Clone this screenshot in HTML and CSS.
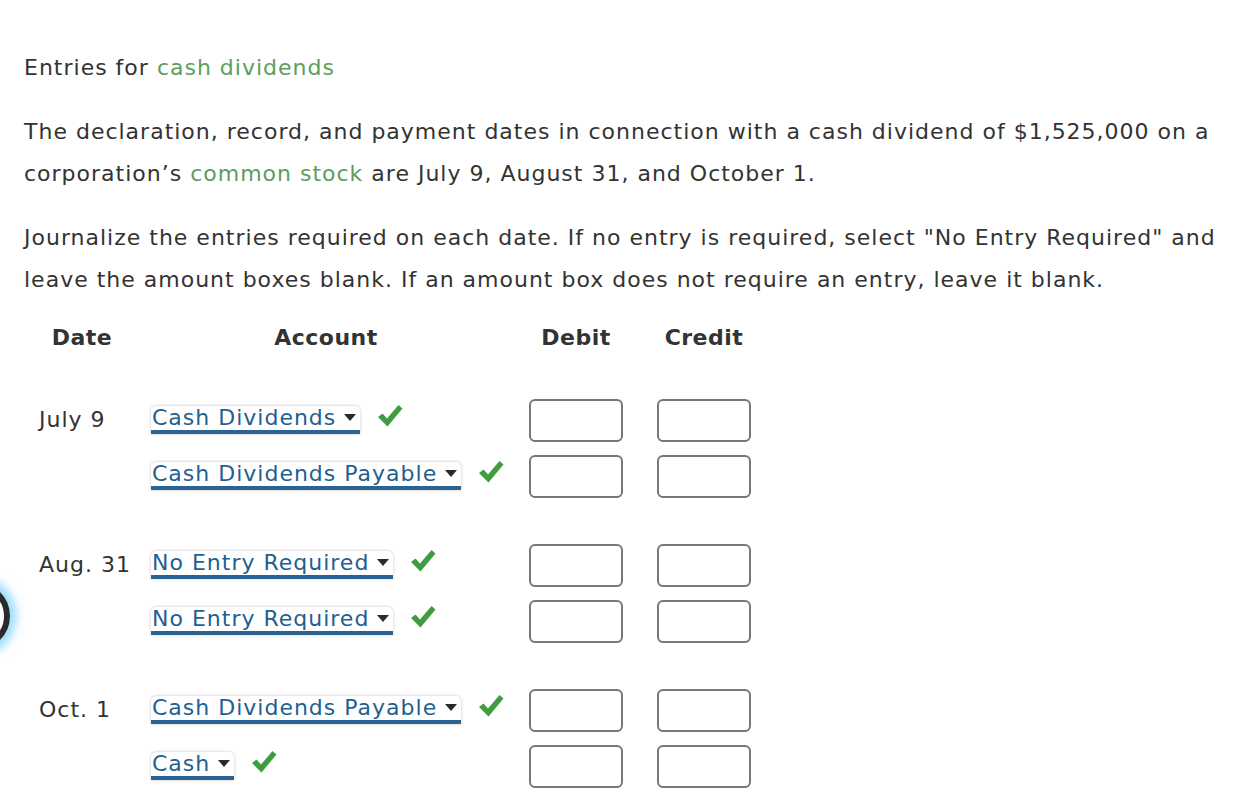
FILE: index.html
```html
<!DOCTYPE html>
<html lang="en">
<head>
    <meta charset="UTF-8">
    <meta name="viewport" content="width=device-width, initial-scale=1.0">
    <title>Entries for cash dividends</title>
    <link rel="stylesheet" href="styles.css">
</head>
<body>
    <div class="focus-ring"></div>

    <p class="title">Entries for <span class="term">cash dividends</span></p>

    <p>The declaration, record, and payment dates in connection with a cash dividend of $1,525,000 on a corporation’s <span class="term">common stock</span> are July 9, August 31, and October 1.</p>

    <p>Journalize the entries required on each date. If no entry is required, select "No Entry Required" and leave the amount boxes blank. If an amount box does not require an entry, leave it blank.</p>

    <div class="journal">
        <div class="row head">
            <div class="c-date">Date</div>
            <div class="c-acct">Account</div>
            <div class="c-amt">Debit</div>
            <div class="c-amt">Credit</div>
        </div>

        <div class="group">
            <div class="row">
                <div class="c-date">July 9</div>
                <div class="c-acct"><span class="pick">Cash Dividends</span><span class="ok"></span></div>
                <div class="c-amt"><span class="box"></span></div>
                <div class="c-amt"><span class="box"></span></div>
            </div>
            <div class="row">
                <div class="c-date"></div>
                <div class="c-acct"><span class="pick">Cash Dividends Payable</span><span class="ok"></span></div>
                <div class="c-amt"><span class="box"></span></div>
                <div class="c-amt"><span class="box"></span></div>
            </div>
        </div>

        <div class="group">
            <div class="row">
                <div class="c-date">Aug. 31</div>
                <div class="c-acct"><span class="pick">No Entry Required</span><span class="ok"></span></div>
                <div class="c-amt"><span class="box"></span></div>
                <div class="c-amt"><span class="box"></span></div>
            </div>
            <div class="row">
                <div class="c-date"></div>
                <div class="c-acct"><span class="pick">No Entry Required</span><span class="ok"></span></div>
                <div class="c-amt"><span class="box"></span></div>
                <div class="c-amt"><span class="box"></span></div>
            </div>
        </div>

        <div class="group">
            <div class="row">
                <div class="c-date">Oct. 1</div>
                <div class="c-acct"><span class="pick">Cash Dividends Payable</span><span class="ok"></span></div>
                <div class="c-amt"><span class="box"></span></div>
                <div class="c-amt"><span class="box"></span></div>
            </div>
            <div class="row">
                <div class="c-date"></div>
                <div class="c-acct"><span class="pick">Cash</span><span class="ok"></span></div>
                <div class="c-amt"><span class="box"></span></div>
                <div class="c-amt"><span class="box"></span></div>
            </div>
        </div>
    </div>

    <script>
        // the green check marks are the same svg everywhere
        var check = '<svg width="26" height="24" viewBox="0 0 26 24"><path d="M1 13 L5.5 9.5 L10 14.5 L21.5 1 L25.5 4.5 L10.5 22.5 Z" fill="#3f9c3f"/></svg>';
        document.querySelectorAll('.ok').forEach(function (el) {
            el.innerHTML = check;
        });
    </script>
</body>
</html>
```

FILE: styles.css
```css
body {
    font-family: "DejaVu Sans", Verdana, sans-serif;
    font-size: 22px;
    line-height: 42px;
    letter-spacing: 1px;
    color: #333;
    background-color: #fff;
    margin: 0;
    padding: 47px 24px 0 24px;
    overflow: hidden;
}
p {
    margin: 0 0 22px 0;
    max-width: 1212px;
}
.term {
    color: #5b9e5d;
}
.focus-ring {
    position: absolute;
    left: -58px;
    top: 582px;
    width: 56px;
    height: 56px;
    border: 6px solid #2b2b2b;
    border-radius: 50%;
    box-shadow: 0 0 10px 6px rgba(60, 190, 250, 0.55);
}
.journal {
    margin-top: -6px;
}
.row {
    display: grid;
    grid-template-columns: 116px 372px 128px 128px;
    align-items: center;
    height: 56px;
}
.head {
    font-weight: bold;
    text-align: center;
    letter-spacing: 0.5px;
    height: 42px;
    margin-bottom: 33px;
}
.group {
    margin-bottom: 33px;
}
.group .c-date {
    padding-left: 15px;
}
.group .c-acct {
    padding-left: 11px;
    display: flex;
    align-items: center;
}
.c-amt {
    display: flex;
    justify-content: center;
}
.head .c-amt {
    display: block;
}
.pick {
    display: inline-block;
    color: #1f5f91;
    line-height: 24px;
    padding: 0 24px 0 1px;
    background-color: #fff;
    border-bottom: 4px solid #2a6392;
    border-radius: 5px 5px 0 0;
    box-shadow: 0 0 3px rgba(0, 0, 0, 0.25);
    position: relative;
    white-space: nowrap;
}
.pick::after {
    content: "";
    position: absolute;
    right: 4px;
    top: 8px;
    border-left: 6px solid transparent;
    border-right: 6px solid transparent;
    border-top: 7px solid #2a2a2a;
}
.ok {
    display: inline-flex;
    margin-left: 17px;
    margin-top: -8px;
}
.box {
    display: block;
    width: 90px;
    height: 39px;
    border: 2px solid #777;
    border-radius: 6px;
}
```
